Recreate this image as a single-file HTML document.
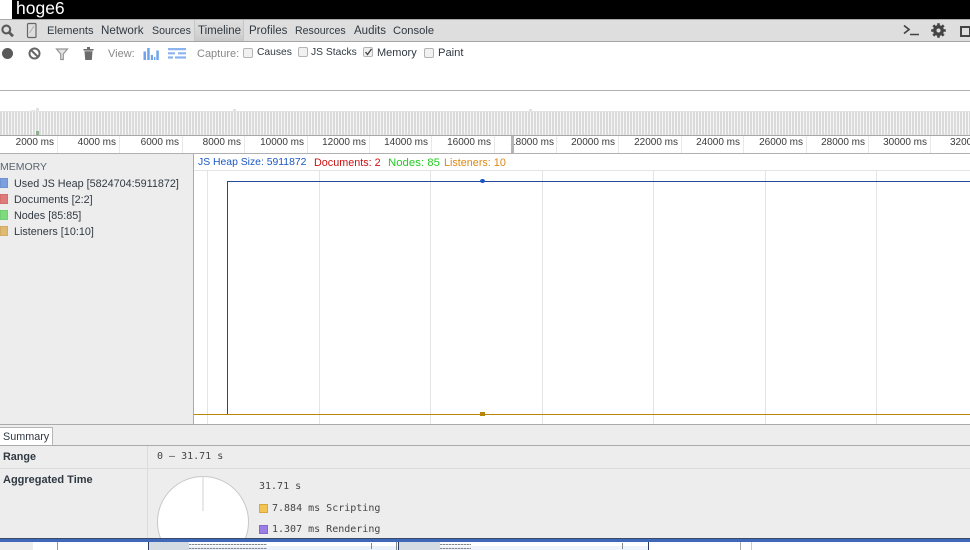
<!DOCTYPE html>
<html><head><meta charset="utf-8"><title>hoge6</title>
<style>
html,body{margin:0;padding:0;background:#fff}
#p{position:relative;width:970px;height:550px;overflow:hidden;background:#fff;font-family:"Liberation Sans",sans-serif;font-size:11px;color:#303942}
#p div,#p svg{position:absolute}
.t{white-space:nowrap;line-height:14px}
.m{font-family:"DejaVu Sans Mono","Liberation Mono",monospace;font-size:10px;color:#444;white-space:nowrap;line-height:14px}
.tick{width:1px;top:136px;height:17px;background:#e8e8e8}
.lbl{top:135.5px;width:60px;text-align:right;font-size:10px;color:#3a3a3a;white-space:nowrap;line-height:14px}
.g{width:1px;top:171px;height:253px;background:#e4e4e4}
.sw{width:8px;height:10px;left:0;box-sizing:border-box}
.cb{width:10px;height:10px;top:47px;box-sizing:border-box;border:1px solid #b4b4b4;border-radius:2px;background:#f1f1f1}
.gr{color:#888}
.tl{height:1px;background:repeating-linear-gradient(90deg,#85898f 0,#85898f 2px,#c4c8ce 2px,#c4c8ce 3px)}
</style></head><body><div id="p">
<div style="left:12px;top:0;width:958px;height:19px;background:#000"></div>
<div class="t" style="left:16px;top:-1px;color:#fff;font-size:17.5px;line-height:19px">hoge6</div>

<div style="left:0;top:19px;width:970px;height:22px;background:#dedede;border-top:1px solid #a9a9a9;box-sizing:border-box"></div>
<div style="left:0;top:41px;width:970px;height:1px;background:#a5a5a5"></div>
<div style="left:194px;top:20px;width:50px;height:21px;background:linear-gradient(#dedede,#d2d2d2 70%,#c8c8c8);border-left:1px solid #c6c6c6;border-right:1px solid #c6c6c6;box-sizing:border-box"></div>
<svg style="left:0;top:22px" width="16" height="16" viewBox="0 0 16 16"><circle cx="6.3" cy="7.5" r="3.9" fill="none" stroke="#5a5a5a" stroke-width="2.1"/><path d="M9.2 10.5L13 14.2" stroke="#5a5a5a" stroke-width="2.8"/></svg>
<svg style="left:26px;top:22px" width="12" height="17" viewBox="0 0 12 17"><rect x="1.5" y="1.5" width="8.5" height="14" rx="1" fill="none" stroke="#666" stroke-width="1.2"/><path d="M3.5 11L8 4" stroke="#b0b0b0"/></svg>
<div class="t" style="left:47px;top:24px;font-size:11.2px">Elements</div>
<div class="t" style="left:101px;top:24px;font-size:11.6px">Network</div>
<div class="t" style="left:152px;top:24px;font-size:10.6px">Sources</div>
<div class="t" style="left:198px;top:24px;font-size:11.5px">Timeline</div>
<div class="t" style="left:249px;top:24px;font-size:11.5px">Profiles</div>
<div class="t" style="left:295px;top:24px;font-size:10.6px">Resources</div>
<div class="t" style="left:354px;top:24px;font-size:11.5px">Audits</div>
<div class="t" style="left:393px;top:24px;font-size:11.2px">Console</div>
<svg style="left:902px;top:22px" width="18" height="16" viewBox="0 0 18 16"><path d="M2 3.5L7 7.5L2 11.5" fill="none" stroke="#444" stroke-width="1.7"/><path d="M8 12.5H17" stroke="#444" stroke-width="1.5"/></svg>
<svg style="left:930px;top:22px" width="17" height="17" viewBox="0 0 17 17"><circle cx="8.5" cy="8.5" r="5.4" fill="#444"/><path d="M8.5 1.2V15.8M1.2 8.5H15.8M3.3 3.3L13.7 13.7M13.7 3.3L3.3 13.7" stroke="#444" stroke-width="2.6"/><circle cx="8.5" cy="8.5" r="2" fill="#dedede"/></svg>
<div style="left:960px;top:26px;width:11px;height:11px;border:2px solid #444;box-sizing:border-box"></div>

<div style="left:2px;top:47.5px;width:11px;height:11px;border-radius:50%;background:#5a5a5a"></div>
<svg style="left:28px;top:46.5px" width="13" height="13" viewBox="0 0 13 13"><circle cx="6.5" cy="6.5" r="5" fill="none" stroke="#666" stroke-width="2"/><path d="M3 3L10 10" stroke="#666" stroke-width="2"/></svg>
<svg style="left:54.5px;top:46.5px" width="14" height="14" viewBox="0 0 14 14"><path d="M1.5 2H12.5L8.3 7V12.5H5.7V7Z" fill="#e4e4e4" stroke="#959595" stroke-width="1.2"/></svg>
<svg style="left:82px;top:45.5px" width="13" height="15" viewBox="0 0 13 15"><path d="M1.5 3H11.5V4.6H1.5ZM5 1H8V3H5ZM2.5 5.3H10.5L9.8 14H3.2Z" fill="#6c6c6c"/></svg>
<div class="t gr" style="left:108px;top:46.5px;font-size:11px">View:</div>
<svg style="left:143px;top:48px" width="16" height="12" viewBox="0 0 16 12"><path d="M0.5 3.5H3V12H0.5ZM4.2 0H6.7V12H4.2ZM7.8 7H10V12H7.8ZM11 9H12.4V12H11ZM13.3 2.5H15.8V12H13.3Z" fill="#6fa3ec"/></svg>
<svg style="left:168px;top:48px" width="18" height="11" viewBox="0 0 18 11"><path d="M0 0H18V2.2H0ZM0 4.2H7V6.4H0ZM10 4.2H18V6.4H10ZM0 8.4H5V10.6H0ZM7 8.4H18V10.6H7Z" fill="#8ab4f0"/></svg>
<div class="t gr" style="left:197px;top:46.5px;font-size:11px">Capture:</div>
<div class="cb" style="left:243px;top:47.5px"></div><div class="t" style="left:257px;top:46px;font-size:10.3px">Causes</div>
<div class="cb" style="left:298px"></div><div class="t" style="left:311px;top:46px;font-size:10.3px">JS Stacks</div>
<div class="cb" style="left:363px"></div><svg style="left:364px;top:48px" width="9" height="8" viewBox="0 0 9 8"><path d="M1.5 4L3.5 6.5L7.5 1" fill="none" stroke="#444" stroke-width="1.4"/></svg><div class="t" style="left:377px;top:46px;font-size:11px">Memory</div>
<div class="cb" style="left:424px;top:47.5px"></div><div class="t" style="left:438px;top:46px;font-size:11.2px">Paint</div>

<div style="left:0;top:90px;width:970px;height:1px;background:#b0b0b0"></div>
<div style="left:0;top:112px;width:970px;height:23px;background:repeating-linear-gradient(90deg,#dadada 0,#dadada 2px,#f6f6f6 2px,#f6f6f6 3px)"></div>
<div style="left:0;top:111px;width:970px;height:1px;background:#e2e2e2"></div>
<div style="left:36px;top:108px;width:3px;height:4px;background:#e2e2e2"></div>
<div style="left:31px;top:110px;width:4px;height:2px;background:#e6e6e6"></div>
<div style="left:36px;top:131px;width:3px;height:4px;background:#8fae8f"></div>
<div style="left:233px;top:109px;width:3px;height:3px;background:#e2e2e2"></div>
<div style="left:529px;top:109px;width:3px;height:3px;background:#e2e2e2"></div>
<div style="left:0;top:135px;width:970px;height:1px;background:#a8a8a8"></div>

<div class="tick" style="left:57px"></div><div class="lbl" style="left:-6px">2000 ms</div>
<div class="tick" style="left:119px"></div><div class="lbl" style="left:56px">4000 ms</div>
<div class="tick" style="left:182px"></div><div class="lbl" style="left:119px">6000 ms</div>
<div class="tick" style="left:244px"></div><div class="lbl" style="left:181px">8000 ms</div>
<div class="tick" style="left:307px"></div><div class="lbl" style="left:244px">10000 ms</div>
<div class="tick" style="left:369px"></div><div class="lbl" style="left:306px">12000 ms</div>
<div class="tick" style="left:431px"></div><div class="lbl" style="left:368px">14000 ms</div>
<div class="tick" style="left:494px"></div><div class="lbl" style="left:431px">16000 ms</div>
<div class="tick" style="left:556px"></div><div class="lbl" style="left:494px">18000 ms</div>
<div class="tick" style="left:618px"></div><div class="lbl" style="left:555px">20000 ms</div>
<div class="tick" style="left:681px"></div><div class="lbl" style="left:618px">22000 ms</div>
<div class="tick" style="left:743px"></div><div class="lbl" style="left:680px">24000 ms</div>
<div class="tick" style="left:806px"></div><div class="lbl" style="left:743px">26000 ms</div>
<div class="tick" style="left:868px"></div><div class="lbl" style="left:805px">28000 ms</div>
<div class="tick" style="left:930px"></div><div class="lbl" style="left:867px">30000 ms</div>
<div class="t" style="left:950px;top:135.5px;font-size:10px;color:#3a3a3a">3200</div>
<div style="left:511px;top:136px;width:3px;height:17px;background:#b4b4b4"></div>
<div style="left:0;top:153px;width:970px;height:1px;background:#b0b0b0"></div>

<div style="left:0;top:154px;width:193px;height:270px;background:#ededed"></div>
<div style="left:193px;top:154px;width:1px;height:270px;background:#aaa"></div>
<div class="t" style="left:0;top:160px;color:#5a6470;font-size:10.5px">MEMORY</div>
<div class="sw" style="top:178px;background:#7d9fdd;border:1px solid #6f92d2"></div><div class="t" style="left:14px;top:177px;font-size:10.8px">Used JS Heap [5824704:5911872]</div>
<div class="sw" style="top:194px;background:#e07b7b;border:1px solid #d26f6f"></div><div class="t" style="left:14px;top:193px;font-size:10.8px">Documents [2:2]</div>
<div class="sw" style="top:210px;background:#7ddb7d;border:1px solid #70cf70"></div><div class="t" style="left:14px;top:209px;font-size:10.8px">Nodes [85:85]</div>
<div class="sw" style="top:226px;background:#e0b972;border:1px solid #d2ab66"></div><div class="t" style="left:14px;top:225px;font-size:10.8px">Listeners [10:10]</div>

<div class="t" style="left:198px;top:155.5px;color:#1a56c4;font-size:10.4px">JS Heap Size: 5911872</div>
<div class="t" style="left:314px;top:155.5px;color:#cc1111;font-size:10.8px">Documents: 2</div>
<div class="t" style="left:388px;top:155.5px;color:#22cc22;font-size:11.4px">Nodes: 85</div>
<div class="t" style="left:444px;top:155.5px;color:#da8a14;font-size:10.8px">Listeners: 10</div>
<div style="left:194px;top:170px;width:776px;height:1px;background:#e4e4e4"></div>
<div class="g" style="left:207px"></div><div class="g" style="left:319px"></div><div class="g" style="left:430px"></div><div class="g" style="left:542px"></div><div class="g" style="left:653px"></div><div class="g" style="left:765px"></div><div class="g" style="left:876px"></div>
<div style="left:227px;top:181px;width:743px;height:1px;background:#23479a"></div>
<div style="left:227px;top:181px;width:1px;height:233px;background:#23479a"></div>
<div style="left:194px;top:414px;width:776px;height:1px;background:#b8860b"></div>
<div style="left:480px;top:179px;width:5px;height:4px;border-radius:50%;background:#1a56c4"></div>
<div style="left:480px;top:412px;width:5px;height:4px;background:#b8860b"></div>

<div style="left:0;top:424px;width:970px;height:114px;background:#ededed"></div>
<div style="left:0;top:424px;width:970px;height:1px;background:#aaa"></div>
<div style="left:0;top:427px;width:53px;height:19px;background:#fff;border:1px solid #b5b5b5;border-left:0;border-bottom:0;box-sizing:border-box"></div>
<div class="t" style="left:3px;top:430px;font-size:10.8px">Summary</div>
<div style="left:0;top:445px;width:970px;height:1px;background:#aaa"></div>
<div style="left:147px;top:446px;width:1px;height:92px;background:#dcdcdc"></div>
<div style="left:0;top:468px;width:970px;height:1px;background:#dcdcdc"></div>
<div class="t" style="left:3px;top:450px;font-weight:bold;font-size:10.8px">Range</div>
<div class="t" style="left:3px;top:473px;font-weight:bold;font-size:11px">Aggregated Time</div>
<div class="m" style="left:157px;top:450px">0 – 31.71 s</div>
<svg style="left:155px;top:474px" width="96" height="64" viewBox="0 0 96 64"><circle cx="48" cy="48" r="45.5" fill="#fff" stroke="#c8c8c8"/><path d="M48 2.5V37" stroke="#ddd" stroke-width="1.4"/></svg>
<div class="m" style="left:259px;top:480px">31.71 s</div>
<div style="left:259px;top:504px;width:9px;height:9px;box-sizing:border-box;background:#f1c453;border:1px solid #d8a93a"></div>
<div class="m" style="left:272px;top:502px">7.884 ms Scripting</div>
<div style="left:259px;top:525px;width:9px;height:9px;box-sizing:border-box;background:#9b7fe6;border:1px solid #8468d0"></div>
<div class="m" style="left:272px;top:523px">1.307 ms Rendering</div>

<div style="left:0;top:538px;width:970px;height:12px;background:#fff"></div>
<div style="left:0;top:538px;width:970px;height:1px;background:#3a4a6a"></div>
<div style="left:0;top:539px;width:970px;height:3px;background:#3f68b8"></div>
<div style="left:0;top:542px;width:33px;height:8px;background:#ededed"></div>
<div style="left:57px;top:542px;width:1px;height:8px;background:#999"></div>
<div style="left:148px;top:542px;width:250px;height:8px;background:linear-gradient(#fff 0,#fff 4px,#eaf1fb 4px)"></div>
<div style="left:148px;top:542px;width:1px;height:8px;background:#2c3e60"></div>
<div style="left:149px;top:542px;width:40px;height:8px;background:#d5dbe3"></div>
<div class="tl" style="left:189px;top:544px;width:78px"></div>
<div class="tl" style="left:189px;top:548px;width:78px"></div>
<div style="left:371px;top:543px;width:1px;height:6px;background:#888"></div>
<div style="left:396px;top:542px;width:1px;height:8px;background:#888"></div>
<div style="left:398px;top:542px;width:1px;height:8px;background:#2c3e60"></div>
<div style="left:399px;top:542px;width:249px;height:8px;background:linear-gradient(#fff 0,#fff 4px,#eef3fc 4px)"></div>
<div style="left:399px;top:542px;width:41px;height:8px;background:#d5dbe3"></div>
<div class="tl" style="left:440px;top:544px;width:31px"></div>
<div class="tl" style="left:440px;top:548px;width:31px"></div>
<div style="left:622px;top:543px;width:1px;height:6px;background:#888"></div>
<div style="left:648px;top:542px;width:1px;height:8px;background:#2c3e60"></div>
<div style="left:740px;top:542px;width:1px;height:8px;background:#aaa"></div>
<div style="left:751px;top:542px;width:1px;height:8px;background:#ccc"></div>
</div></body></html>
